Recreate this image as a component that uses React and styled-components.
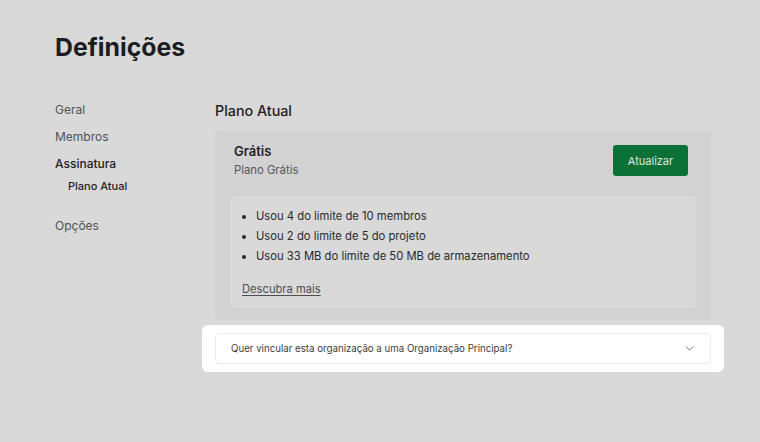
import React from "react";
import styled, { createGlobalStyle } from "styled-components";
import { ChevronDown } from "lucide-react";

const Global = createGlobalStyle`
  html, body { margin: 0; padding: 0; background: #d9d9d9; }
  body { font-family: Inter, "Noto Sans", sans-serif; color: #1d1f23; -webkit-font-smoothing: antialiased; }
  * { box-sizing: border-box; }
`;

const Page = styled.div`
  width: 760px;
  height: 442px;
  background: #d9d9d9;
  padding: 31px 49px 0 55px;
`;

const Title = styled.h1`
  margin: 0;
  font-size: 24.8px;
  line-height: 32px;
  font-weight: 700;
  color: #1b1d21;
`;

const Layout = styled.div`
  display: grid;
  grid-template-columns: 160px 1fr;
  margin-top: 38px;
`;

const Nav = styled.nav`
  display: flex;
  flex-direction: column;
`;

const NavItem = styled.a`
  display: block;
  font-size: 12px;
  line-height: 18px;
  height: ${(p) => p.$h || 27}px;
  color: ${(p) => (p.$active ? "#1f2125" : "#505257")};
  font-weight: ${(p) => (p.$active ? 500 : 400)};
`;

const SubItem = styled.a`
  display: block;
  font-size: 11px;
  line-height: 16px;
  height: 39px;
  padding-left: 13px;
  margin-top: 1px;
  font-weight: 500;
  color: #1f2125;
`;

const Main = styled.main`
  display: flex;
  flex-direction: column;
`;

const SectionTitle = styled.h2`
  margin: 0 0 10px;
  font-size: 14.3px;
  line-height: 20px;
  font-weight: 500;
  color: #1f2125;
`;

const Card = styled.section`
  background: #d2d2d2;
  border-radius: 2px;
  padding: 10px 15px 12px;
`;

const CardHeader = styled.div`
  display: flex;
  justify-content: space-between;
  align-items: flex-start;
  padding: 0 8px 0 4px;
`;

const PlanName = styled.div`
  font-size: 13px;
  line-height: 20px;
  font-weight: 600;
  color: #1f2125;
`;

const PlanSub = styled.div`
  font-size: 11.3px;
  line-height: 18px;
  color: #55575c;
`;

const Button = styled.button`
  margin-top: 4px;
  height: 31px;
  width: 75px;
  border: none;
  border-radius: 3px;
  background: #0b7137;
  color: #dfe9e2;
  font-family: inherit;
  font-size: 11px;
  padding: 0;
`;

const Usage = styled.div`
  margin-top: 17px;
  background: #d9d9d9;
  border-radius: 3px;
  padding: 10px 12px 9px;
`;

const List = styled.ul`
  margin: 0 0 13px;
  padding-left: 14px;
  list-style: disc;
`;

const Item = styled.li`
  font-size: 11.25px;
  line-height: 20px;
  color: #27292d;
`;

const Link = styled.a`
  display: block;
  font-size: 11.2px;
  line-height: 20px;
  color: #4d4f54;
  text-decoration: underline;
  text-underline-offset: 2px;
`;

const Spotlight = styled.div`
  margin: 5px -13px 0;
  padding: 8px 13px;
  background: #ffffff;
  border-radius: 6px;
`;

const Accordion = styled.div`
  display: flex;
  align-items: center;
  justify-content: space-between;
  height: 31px;
  border: 1px solid #ebebeb;
  border-radius: 4px;
  padding: 0 14px 0 15px;
  font-size: 9.7px;
  color: #3b3d42;
`;

export default function App() {
  return (
    <Page>
      <Global />
      <Title>Definições</Title>
      <Layout>
        <Nav>
          <NavItem>Geral</NavItem>
          <NavItem>Membros</NavItem>
          <NavItem $active $h={22}>Assinatura</NavItem>
          <SubItem>Plano Atual</SubItem>
          <NavItem>Opções</NavItem>
        </Nav>
        <Main>
          <SectionTitle>Plano Atual</SectionTitle>
          <Card>
            <CardHeader>
              <div>
                <PlanName>Grátis</PlanName>
                <PlanSub>Plano Grátis</PlanSub>
              </div>
              <Button>Atualizar</Button>
            </CardHeader>
            <Usage>
              <List>
                <Item>Usou 4 do limite de 10 membros</Item>
                <Item>Usou 2 do limite de 5 do projeto</Item>
                <Item>Usou 33 MB do limite de 50 MB de armazenamento</Item>
              </List>
              <Link>Descubra mais</Link>
            </Usage>
          </Card>
          <Spotlight>
            <Accordion>
              <span>Quer vincular esta organização a uma Organização Principal?</span>
              <ChevronDown size={13} strokeWidth={1.6} color="#55575c" />
            </Accordion>
          </Spotlight>
        </Main>
      </Layout>
    </Page>
  );
}
